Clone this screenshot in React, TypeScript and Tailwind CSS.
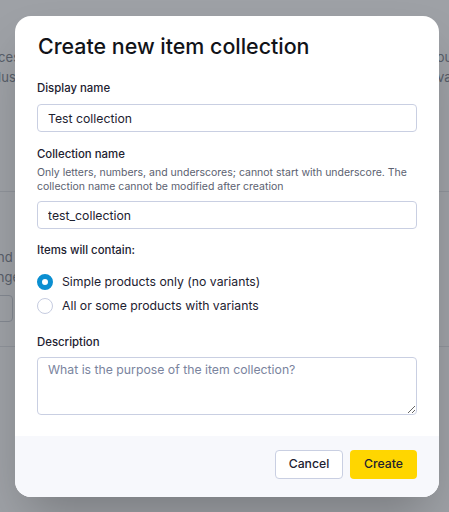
import { useState } from 'react';

function BgPeek({ lines, align }: { lines: string[]; align: 'left' | 'right' }) {
  return (
    <div className={`w-[20px] overflow-hidden flex flex-col ${align === 'left' ? 'items-end' : 'items-start'}`}>
      {lines.map((l) => (
        <span key={l} className="whitespace-nowrap text-[13px] leading-[20px] text-[#868c96]">
          {l}
        </span>
      ))}
    </div>
  );
}

function Field({ label, hint, children }: { label: string; hint?: string; children: React.ReactNode }) {
  return (
    <div className="flex flex-col">
      <label className="text-[11.4px] leading-[16px] font-medium text-[#1d2130]">{label}</label>
      {hint && <p className="mt-[4px] text-[10.5px] leading-[14px] text-[#5b6170]">{hint}</p>}
      <div className={hint ? 'mt-[7px]' : 'mt-[8px]'}>{children}</div>
    </div>
  );
}

function Radio({ checked, label, onClick }: { checked: boolean; label: string; onClick: () => void }) {
  return (
    <button type="button" onClick={onClick} className="flex items-center gap-[9px] h-[24px] text-left">
      <span
        className={`w-[16px] h-[16px] rounded-full bg-white ${
          checked ? 'border-[5px] border-[#0b8fd1]' : 'border border-[#c6cce0]'
        }`}
      />
      <span className="text-[12.25px] text-[#1d2130]">{label}</span>
    </button>
  );
}

export default function App() {
  const [variant, setVariant] = useState<'simple' | 'variants'>('simple');
  const [display, setDisplay] = useState('Test collection');
  const [name, setName] = useState('test_collection');

  return (
    <div className="relative w-[449px] h-[512px] overflow-hidden bg-white font-['Inter',sans-serif]">
      {/* page behind the dialog */}
      <div className="flex flex-col h-full">
        <div className="flex justify-between pt-[47px] h-[192px] border-b border-[#e5e7eb]">
          <BgPeek lines={['Resources', 'Must']} align="left" />
          <BgPeek lines={['Your', 'Available']} align="right" />
        </div>
        <div className="flex flex-col pt-[55px] h-[155px] border-b border-[#e5e7eb]">
          <BgPeek lines={['Brand :', 'Change']} align="left" />
          <div className="mt-[8px] -ml-[20px] w-[33px] h-[27px] border border-[#d1d5db] rounded-[4px]" />
        </div>
      </div>

      {/* overlay + dialog */}
      <div className="absolute inset-0 bg-[rgba(24,31,43,0.42)] flex justify-start pl-[15px] pt-[16px]">
        <div className="w-[424px] h-[481px] bg-white rounded-[16px] shadow-2xl overflow-hidden flex flex-col">
          <div className="flex-1 px-[22px] pt-[16px]">
            <h2 className="text-[21.4px] leading-[28px] font-medium text-[#111318] pl-[1px]">
              Create new item collection
            </h2>

            <div className="mt-[20px] flex flex-col">
              <Field label="Display name">
                <input
                  value={display}
                  onChange={(e) => setDisplay(e.target.value)}
                  className="w-full h-[28px] px-[10px] border border-[#c9cfe2] rounded-[4px] text-[12.25px] text-[#1d2130] outline-none"
                />
              </Field>

              <div className="mt-[14px]">
                <Field
                  label="Collection name"
                  hint="Only letters, numbers, and underscores; cannot start with underscore. The collection name cannot be modified after creation"
                >
                  <input
                    value={name}
                    onChange={(e) => setName(e.target.value)}
                    className="w-full h-[28px] px-[10px] border border-[#c9cfe2] rounded-[4px] text-[12.25px] text-[#1d2130] outline-none"
                  />
                </Field>
              </div>

              <div className="mt-[13px] flex flex-col">
                <label className="text-[11.4px] leading-[16px] font-medium text-[#1d2130]">Items will contain:</label>
                <div className="mt-[12px] flex flex-col">
                  <Radio
                    checked={variant === 'simple'}
                    label="Simple products only (no variants)"
                    onClick={() => setVariant('simple')}
                  />
                  <Radio
                    checked={variant === 'variants'}
                    label="All or some products with variants"
                    onClick={() => setVariant('variants')}
                  />
                </div>
              </div>

              <div className="mt-[16px] flex flex-col">
                <label className="text-[11.4px] leading-[16px] font-medium text-[#1d2130]">Description</label>
                <textarea
                  placeholder="What is the purpose of the item collection?"
                  className="mt-[7px] block w-full h-[58px] px-[10px] pt-[3px] leading-[18px] border border-[#c9cfe2] rounded-[4px] text-[12.25px] text-[#1d2130] placeholder:text-[#7a849e] outline-none"
                />
              </div>
            </div>
          </div>

          <div className="h-[61px] bg-[#f7f8fc] flex justify-end items-start gap-[7px] px-[22px] pt-[14px]">
            <button className="h-[29px] w-[68px] bg-white border border-[#c9cfe2] rounded-[4px] text-[12.25px] font-medium text-[#1d2130]">
              Cancel
            </button>
            <button className="h-[29px] w-[67px] bg-[#ffd600] rounded-[4px] text-[12.25px] font-medium text-[#1d2130]">
              Create
            </button>
          </div>
        </div>
      </div>
    </div>
  );
}
